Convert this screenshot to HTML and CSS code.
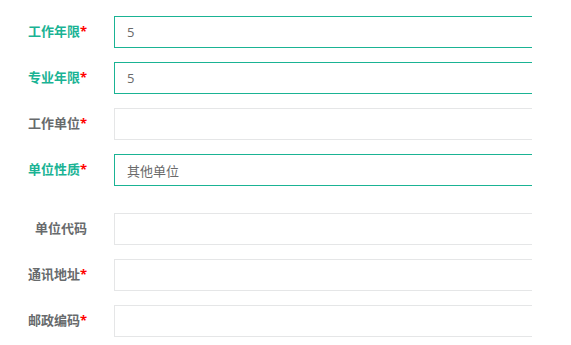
FILE: index.html
```html
<!DOCTYPE html>
<html lang="zh">
<head>
<meta charset="utf-8">
<link rel="stylesheet" href="styles.css">
</head>
<body>
<form class="form">
  <div class="row ok">
    <label class="lbl">工作年限<span class="req">*</span></label>
    <div class="field"><input class="inp" value="5"></div>
  </div>
  <div class="row ok">
    <label class="lbl">专业年限<span class="req">*</span></label>
    <div class="field"><input class="inp" value="5"></div>
  </div>
  <div class="row">
    <label class="lbl">工作单位<span class="req">*</span></label>
    <div class="field"><input class="inp" value=""></div>
  </div>
  <div class="row ok wide">
    <label class="lbl">单位性质<span class="req">*</span></label>
    <div class="field"><input class="inp" value="其他单位"></div>
  </div>
  <div class="row">
    <label class="lbl">单位代码</label>
    <div class="field"><input class="inp" value=""></div>
  </div>
  <div class="row">
    <label class="lbl">通讯地址<span class="req">*</span></label>
    <div class="field"><input class="inp" value=""></div>
  </div>
  <div class="row">
    <label class="lbl">邮政编码<span class="req">*</span></label>
    <div class="field"><input class="inp" value=""></div>
  </div>
</form>
</body>
</html>
```
FILE: styles.css
```css
html, body {
  margin: 0;
  padding: 0;
  background: #fff;
}
body {
  font-family: "Open Sans", "Noto Sans CJK SC", sans-serif;
  font-size: 13px;
  color: #676a6c;
}
.form {
  padding-top: 16px;
}
.row {
  display: flex;
  align-items: center;
  height: 32px;
  margin-bottom: 14px;
}
.row.wide {
  margin-bottom: 27px;
}
.lbl {
  width: 87px;
  text-align: right;
  font-weight: bold;
  color: #676a6c;
  flex: none;
  padding-bottom: 4px;
}
.req {
  color: #ff0000;
}
.ok .lbl {
  color: #1ab394;
}
.field {
  margin-left: 27px;
  width: 418px;
  height: 32px;
  overflow: hidden;
}
.inp {
  box-sizing: border-box;
  width: 440px;
  height: 32px;
  border: 1px solid #e5e6e7;
  padding: 0 12px;
  margin: 0;
  font-family: "Open Sans", "Noto Sans CJK SC", sans-serif;
  font-size: 13px;
  color: #6a6a6a;
  background: #fff;
  outline: none;
}
.ok .inp {
  border-color: #1ab394;
}
```
